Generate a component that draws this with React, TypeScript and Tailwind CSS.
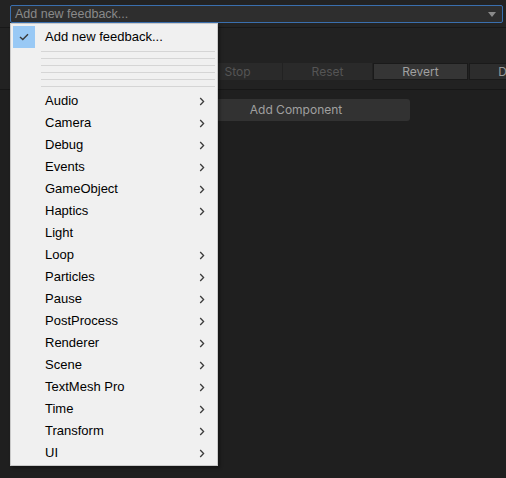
const items: { name: string; sub: boolean }[] = [
    {name: "Audio", sub: true},
    {name: "Camera", sub: true},
    {name: "Debug", sub: true},
    {name: "Events", sub: true},
    {name: "GameObject", sub: true},
    {name: "Haptics", sub: true},
    {name: "Light", sub: false},
    {name: "Loop", sub: true},
    {name: "Particles", sub: true},
    {name: "Pause", sub: true},
    {name: "PostProcess", sub: true},
    {name: "Renderer", sub: true},
    {name: "Scene", sub: true},
    {name: "TextMesh Pro", sub: true},
    {name: "Time", sub: true},
    {name: "Transform", sub: true},
    {name: "UI", sub: true},
]

function Chevron() {
    return (
        <svg width="6" height="9" viewBox="0 0 6 9" className="mr-[12px]">
            <path d="M1.2 1 L4.6 4.5 L1.2 8" fill="none" stroke="#3c3c3c" strokeWidth="1.3"/>
        </svg>
    )
}

function Menu() {
    return (
        <div
            className="absolute left-[10px] top-[23px] w-[208px] h-[443px] bg-[#f0f0f0] border border-[#c9c9c9] shadow-[2px_2px_3px_rgba(0,0,0,0.35)] pt-[2px] font-['Liberation_Sans',Arial,sans-serif] text-[13px] text-black">
            <div className="flex items-center h-[22px]">
                <div className="ml-[2px] w-[22px] h-[22px] bg-[#99c9f5] flex items-center justify-center">
                    <svg width="10" height="8" viewBox="0 0 10 8">
                        <path d="M1 4 L3.8 6.6 L9 1.2" fill="none" stroke="#3a3a3a" strokeWidth="1.4"/>
                    </svg>
                </div>
                <span className="ml-[10px]">Add new feedback...</span>
            </div>
            {[0, 1, 2, 3, 4, 5].map((i) => (
                <div key={i} className="h-[7px] flex items-center pl-[30px] pr-[2px]">
                    <div className="h-px w-full bg-[#d5d5d5]"/>
                </div>
            ))}
            {items.map((item) => (
                <div key={item.name} className="flex items-center justify-between h-[22px] pl-[34px]">
                    <span>{item.name}</span>
                    {item.sub && <Chevron/>}
                </div>
            ))}
        </div>
    )
}

export default function App() {
    return (
        <div className="relative w-[506px] h-[478px] bg-[#1f1f1f] overflow-hidden font-['Inter',sans-serif] text-[12px]">
            <div className="h-[28px] bg-[#232323] border-b border-[#181818] pt-[5px] pl-[10px] pr-[3px]">
                <div
                    className="h-[18px] bg-[#2e2e2e] border border-[#3a6fae] rounded-[2px] flex items-center justify-between pl-[4px] pr-[6px]">
                    <span className="text-[#8a8a8a] font-['Liberation_Sans',Arial,sans-serif] text-[12.5px]">Add new feedback...</span>
                    <svg width="8" height="5" viewBox="0 0 8 5">
                        <path d="M0 0 H8 L4 5 Z" fill="#8a8a8a"/>
                    </svg>
                </div>
            </div>
            <div className="h-[62px] bg-[#222222] border-b border-[#171717] pt-[35px] overflow-hidden">
                <div className="flex pl-[193px] h-[17px] gap-px">
                    <div className="shrink-0 w-[89px] bg-[#2a2a2a] text-[#555555] flex items-center justify-center">Stop</div>
                    <div className="shrink-0 w-[89px] bg-[#2a2a2a] text-[#555555] flex items-center justify-center">Reset</div>
                    <div className="shrink-0 w-[95px] bg-[#353535] text-[#a0a0a0] flex items-center justify-center border border-[#1a1a1a]">Revert</div>
                    <div className="shrink-0 w-[95px] bg-[#2d2d2d] text-[#9a9a9a] flex items-center justify-center border border-[#1a1a1a]">Delete</div>
                </div>
            </div>
            <div className="pt-[9px] pl-[182px]">
                <div className="w-[228px] h-[22px] bg-[#323232] rounded-[3px] text-[#a0a0a0] flex items-center justify-center">
                    Add Component
                </div>
            </div>
            <Menu/>
        </div>
    )
}
